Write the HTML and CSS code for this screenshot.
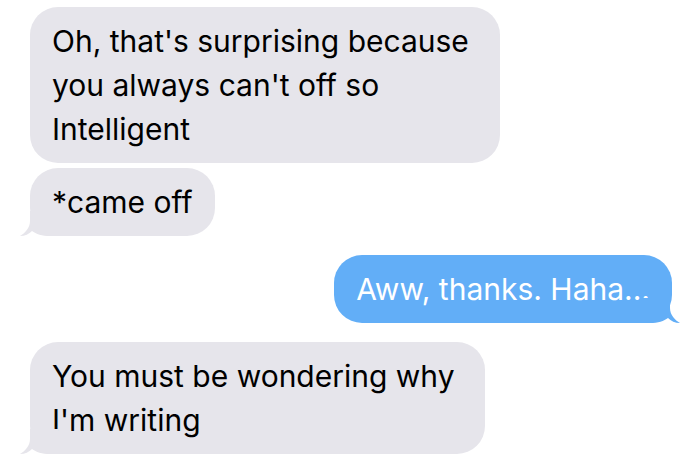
FILE: index.html
```html
<!DOCTYPE html>
<html lang="en">
<head>
<meta charset="utf-8">
<title>Messages</title>
<link rel="stylesheet" href="styles.css">
</head>
<body>
<div class="thread">
  <div class="msg them first">
    <div class="bubble gray w-long">Oh, that's surprising because you always can't off so Intelligent</div>
  </div>
  <div class="msg them cont">
    <div class="bubble gray">*came off
      <svg class="tail tail-left" viewBox="0 0 40 26" width="40" height="26" aria-hidden="true"><path d="M12 0 L12 10 C12 17 7 22 2 25 C7 25 11 23 14 20 C18 23 24 25 32 25 L40 25 L40 0 Z"/></svg>
    </div>
  </div>
  <div class="msg me">
    <div class="bubble blue">Aww, thanks. Haha...
      <svg class="tail tail-right" viewBox="0 0 40 26" width="40" height="26" aria-hidden="true"><path d="M12 0 L12 10 C12 17 7 22 2 25 C7 25 11 23 14 20 C18 23 24 25 32 25 L40 25 L40 0 Z"/></svg>
    </div>
  </div>
  <div class="msg them">
    <div class="bubble gray w-mid">You must be wondering why I'm writing
      <svg class="tail tail-left" viewBox="0 0 40 26" width="40" height="26" aria-hidden="true"><path d="M12 0 L12 10 C12 17 7 22 2 25 C7 25 11 23 14 20 C18 23 24 25 32 25 L40 25 L40 0 Z"/></svg>
    </div>
  </div>
</div>
</body>
</html>
```
FILE: styles.css
```css
html, body {
  margin: 0;
  padding: 0;
  background: #ffffff;
}

.thread {
  width: 700px;
  height: 466px;
  box-sizing: border-box;
  padding: 7px 28px 0 30px;
  display: flex;
  flex-direction: column;
  font-family: "Inter", "Liberation Sans", sans-serif;
  font-size: 30px;
  line-height: 44px;
  font-feature-settings: "calt" 0, "liga" 0;
  color: #000000;
  overflow: hidden;
}

.msg {
  display: flex;
  margin-top: 19px;
}

.msg.first {
  margin-top: 0;
}

.msg.cont {
  margin-top: 5px;
}

.msg.them {
  justify-content: flex-start;
}

.msg.me {
  justify-content: flex-end;
}

.bubble {
  position: relative;
  box-sizing: border-box;
  padding: 12px 22px 12px 22px;
  border-radius: 28px;
}

.gray {
  background: #e6e5eb;
  color: #000000;
}

.blue {
  background: #62aef7;
  color: #ffffff;
}

.w-long {
  width: 470px;
}

.w-mid {
  width: 455px;
}

.tail {
  position: absolute;
  bottom: -1px;
  display: block;
}

.gray .tail {
  fill: #e6e5eb;
}

.blue .tail {
  fill: #62aef7;
}

.tail-left {
  left: -12px;
}

.tail-right {
  right: -10px;
  transform: scaleX(-1);
}
```
